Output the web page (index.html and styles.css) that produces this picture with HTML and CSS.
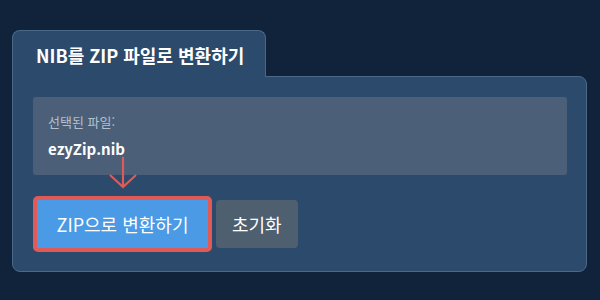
FILE: index.html
```html
<!DOCTYPE html>
<html lang="ko">

<head>
  <meta charset="UTF-8">
  <meta name="viewport" content="width=device-width, initial-scale=1.0">
  <title>NIB를 ZIP 파일로 변환하기</title>
  <link rel="stylesheet" href="styles.css">
</head>

<body>
  <div class="panel">
    <div class="tab">NIB를 ZIP 파일로 변환하기</div>
    <div class="content">
      <div class="file-box">
        <p class="label">선택된 파일:</p>
        <p class="name">ezyZip.nib</p>
      </div>
      <div class="actions">
        <svg class="arrow" width="30" height="32" viewBox="0 0 30 32">
          <path d="M15 0 V30 M2 18 L15 30 L28 18" fill="none" stroke="#e05a58" stroke-width="2.2" />
        </svg>
        <button class="convert">ZIP으로 변환하기</button>
        <button class="reset">초기화</button>
      </div>
    </div>
  </div>
</body>

</html>
```

FILE: styles.css
```css
body {
  margin: 0;
  padding: 30px 13px 0 12px;
  background: #10233a;
  font-family: "Noto Sans CJK KR", "Noto Sans", sans-serif;
  color: #fff;
}

.panel {
  width: 575px;
}

.tab {
  display: inline-block;
  position: relative;
  margin-bottom: -1px;
  padding: 12px 21px 10px 23px;
  background: #2c4a6b;
  border: 1px solid #4c6888;
  border-bottom: none;
  border-radius: 8px 8px 0 0;
  font-size: 18px;
  font-weight: bold;
  line-height: 24px;
}

.content {
  padding: 20px 19px 19px 20px;
  background: #2c4a6b;
  border: 1px solid #4c6888;
  border-radius: 0 8px 8px 8px;
}

.file-box {
  padding: 16px 15px;
  background: #4b5f78;
  border-radius: 3px;
}

.file-box p {
  margin: 0;
}

.file-box .label {
  font-size: 13px;
  line-height: 18px;
  color: #b4bfcc;
  margin-bottom: 8px;
}

.file-box .name {
  font-size: 15px;
  font-weight: bold;
  line-height: 20px;
}

.actions {
  position: relative;
  display: flex;
  align-items: center;
  gap: 4px;
  margin-top: 21px;
}

.arrow {
  position: absolute;
  left: 75px;
  top: -39px;
}

.actions button {
  font-family: inherit;
  font-size: 18px;
  color: #fff;
  cursor: pointer;
}

.convert {
  height: 56px;
  width: 179px;
  background: #4a9ae6;
  border: 4px solid #e05a58;
  border-radius: 5px;
}

.reset {
  height: 48px;
  padding: 0 16px;
  background: #4e5f70;
  border: none;
  border-radius: 4px;
}
```
